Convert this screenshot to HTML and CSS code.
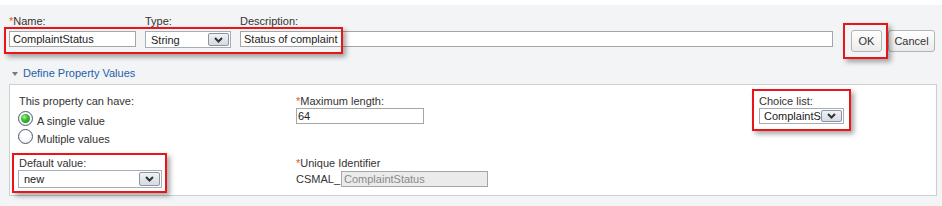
FILE: index.html
```html
<!DOCTYPE html>
<html>
<head>
<meta charset="utf-8">
<link rel="stylesheet" href="styles.css">
</head>
<body>
<div class="page">
  <div class="gray">
    <div class="top-row">
      <div class="field f-name">
        <div class="lbl"><span class="req">*</span>Name:</div>
        <div class="txt">ComplaintStatus</div>
      </div>
      <div class="field f-type">
        <div class="lbl">Type:</div>
        <div class="sel sel-type">
          <span class="val">String</span>
          <span class="arrow"><svg width="9" height="6" viewBox="0 0 9 6"><polyline points="1,1 4.5,4.5 8,1" fill="none" stroke="#333" stroke-width="2"/></svg></span>
        </div>
      </div>
      <div class="field f-desc">
        <div class="lbl">Description:</div>
        <div class="txt">Status of complaint</div>
      </div>
      <div class="buttons">
        <div class="btn btn-ok">OK</div>
        <div class="btn btn-cancel">Cancel</div>
      </div>
    </div>

    <div class="toggle"><span class="tri"></span>Define Property Values</div>

    <div class="panel">
      <div class="cell">
        <div class="lbl lbl-tight">This property can have:</div>
        <div class="opt"><span class="radio on"></span><span class="opt-text">A single value</span></div>
        <div class="opt"><span class="radio"></span><span class="opt-text">Multiple values</span></div>
      </div>
      <div class="cell">
        <div class="lbl2"><span class="req">*</span>Maximum length:</div>
        <div class="txt txt-max">64</div>
      </div>
      <div class="cell">
        <div class="lbl2">Choice list:</div>
        <div class="sel sel-choice">
          <span class="val">ComplaintStatus</span>
          <span class="arrow"><svg width="9" height="6" viewBox="0 0 9 6"><polyline points="1,1 4.5,4.5 8,1" fill="none" stroke="#333" stroke-width="2"/></svg></span>
        </div>
      </div>
      <div class="cell">
        <div class="lbl2">Default value:</div>
        <div class="sel sel-default">
          <span class="val">new</span>
          <span class="arrow"><svg width="9" height="6" viewBox="0 0 9 6"><polyline points="1,1 4.5,4.5 8,1" fill="none" stroke="#333" stroke-width="2"/></svg></span>
        </div>
      </div>
      <div class="cell">
        <div class="lbl2"><span class="req">*</span>Unique Identifier</div>
        <div class="uid"><span>CSMAL_</span><div class="txt txt-uid">ComplaintStatus</div></div>
      </div>
      <div class="cell"></div>
    </div>
  </div>

  <div class="mark m1"></div>
  <div class="mark m2"></div>
  <div class="mark m3"></div>
  <div class="mark m4"></div>
</div>
</body>
</html>
```

FILE: styles.css
```css
* { box-sizing: border-box; }
body {
  margin: 0;
  background: #fff;
  font: 11px "Liberation Sans", Arial, sans-serif;
  color: #333;
}
.page {
  position: relative;
  height: 206px;
  overflow: hidden;
}
.gray {
  margin-top: 5px;
  height: 201px;
  background: #f3f4f6;
  padding-top: 10px;
}
.req { color: #e8561c; }

.top-row {
  display: flex;
  align-items: flex-start;
  padding-left: 9px;
}
.field { display: flex; flex-direction: column; }
.lbl {
  height: 13px;
  line-height: 13px;
  margin-bottom: 3px;
  white-space: nowrap;
}
.f-name { width: 127px; margin-right: 9px; }
.f-type { width: 86px; margin-right: 9px; }
.f-desc { width: 593px; }

.txt {
  height: 16px;
  line-height: 14px;
  border: 1px solid #a6a6a6;
  background: #fff;
  padding: 0 3px;
  white-space: nowrap;
  overflow: hidden;
  color: #222;
}

.sel {
  position: relative;
  display: flex;
  align-items: center;
  border: 1px solid #a7adb6;
  background: #fff;
  overflow: hidden;
  color: #222;
}
.sel .val {
  flex: 1;
  min-width: 0;
  padding-left: 5px;
  white-space: nowrap;
  overflow: hidden;
}
.sel .arrow {
  flex: none;
  width: 21px;
  height: calc(100% - 2px);
  margin-right: 1px;
  border: 1px solid #8c95a2;
  border-radius: 2px;
  background: linear-gradient(#f0f2f6, #d6dae2);
  display: flex;
  align-items: center;
  justify-content: center;
}
.sel-type { height: 17px; }
.sel-choice { width: 85px; height: 16px; }
.sel-choice .val { padding-left: 4px; }
.sel-default { width: 144px; height: 18px; margin-left: -1px; }

.buttons {
  display: flex;
  gap: 6px;
  margin-left: 18px;
  margin-top: 15px;
}
.btn {
  height: 22px;
  border: 1px solid #b4b4b4;
  border-radius: 3px;
  background: linear-gradient(#ffffff, #ebebeb);
  display: flex;
  align-items: center;
  justify-content: center;
  color: #333;
}
.btn-ok { width: 31px; }
.btn-cancel { width: 47px; }

.toggle {
  display: flex;
  align-items: center;
  height: 13px;
  line-height: 13px;
  margin: 15px 0 4px 12px;
  color: #1f5fa9;
}
.tri {
  width: 0;
  height: 0;
  border-left: 3.5px solid transparent;
  border-right: 3.5px solid transparent;
  border-top: 4px solid #7a7a7a;
  margin-right: 5px;
  margin-top: 1px;
}

.panel {
  margin: 0 5px 0 9px;
  border: 1px solid #cfcfcf;
  background: #fff;
  padding: 10px 9px 7px;
  display: grid;
  grid-template-columns: 277px 463px 1fr;
  row-gap: 12px;
}
.lbl2 {
  height: 13px;
  line-height: 13px;
  white-space: nowrap;
}
.lbl-tight { margin-bottom: 1px; }
.opt {
  display: flex;
  align-items: flex-end;
  height: 18px;
}
.opt-text { line-height: 12px; }
.radio {
  position: relative;
  width: 15px;
  height: 15px;
  margin: 0 4px 1px -1px;
  border-radius: 50%;
  border: 1px solid #4a5b70;
  background: radial-gradient(circle at 50% 40%, #ffffff 40%, #dfe3e9 100%);
}
.radio.on::after {
  content: "";
  position: absolute;
  left: 2px;
  top: 2px;
  width: 9px;
  height: 9px;
  border-radius: 50%;
  background: radial-gradient(circle at 38% 35%, #b6f0a4 0, #45c434 35%, #1f9a1f 75%, #167a16 100%);
}
.txt-max { width: 128px; padding: 0 1px; }
.uid {
  display: flex;
  align-items: center;
  height: 18px;
  gap: 1px;
}
.txt-uid {
  width: 147px;
  background: #ebebeb;
  color: #8a8a8a;
  padding: 0 2px;
}

.mark {
  position: absolute;
  border: 2px solid #e8151b;
  box-shadow: 3px 3px 5px rgba(0, 0, 0, 0.35);
  pointer-events: none;
}
.m1 { left: 4px; top: 27px; width: 339px; height: 27px; }
.m2 { left: 843px; top: 23px; width: 45px; height: 36px; }
.m3 { left: 752px; top: 89px; width: 99px; height: 42px; }
.m4 { left: 12px; top: 153px; width: 155px; height: 40px; }
```
